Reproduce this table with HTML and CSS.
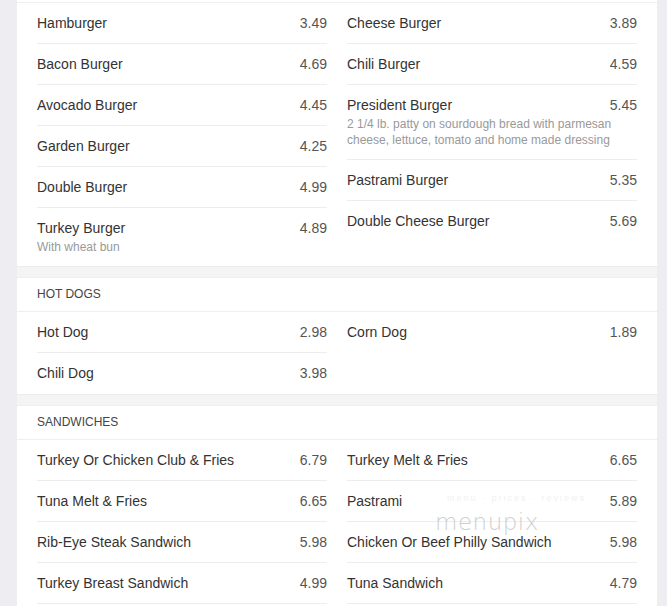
FILE: index.html
```html
<!DOCTYPE html>
<html lang="en">
<head>
<meta charset="utf-8">
<title>Menu</title>
<link rel="stylesheet" href="styles.css">
</head>
<body>
<div class="page">
  <div class="menu">
    <section class="card">
      <h2 class="card-title">BURGERS</h2>
      <div class="cols">
        <ul class="list">
          <li class="item"><span class="name">Hamburger</span><span class="price">3.49</span></li>
          <li class="item"><span class="name">Bacon Burger</span><span class="price">4.69</span></li>
          <li class="item"><span class="name">Avocado Burger</span><span class="price">4.45</span></li>
          <li class="item"><span class="name">Garden Burger</span><span class="price">4.25</span></li>
          <li class="item"><span class="name">Double Burger</span><span class="price">4.99</span></li>
          <li class="item"><span class="name">Turkey Burger</span><span class="price">4.89</span><span class="desc">With wheat bun</span></li>
        </ul>
        <ul class="list">
          <li class="item"><span class="name">Cheese Burger</span><span class="price">3.89</span></li>
          <li class="item"><span class="name">Chili Burger</span><span class="price">4.59</span></li>
          <li class="item"><span class="name">President Burger</span><span class="price">5.45</span><span class="desc">2 1/4 lb. patty on sourdough bread with parmesan cheese, lettuce, tomato and home made dressing</span></li>
          <li class="item"><span class="name">Pastrami Burger</span><span class="price">5.35</span></li>
          <li class="item"><span class="name">Double Cheese Burger</span><span class="price">5.69</span></li>
        </ul>
      </div>
    </section>

    <section class="card card-short">
      <h2 class="card-title">HOT DOGS</h2>
      <div class="cols">
        <ul class="list">
          <li class="item"><span class="name">Hot Dog</span><span class="price">2.98</span></li>
          <li class="item"><span class="name">Chili Dog</span><span class="price">3.98</span></li>
        </ul>
        <ul class="list">
          <li class="item"><span class="name">Corn Dog</span><span class="price">1.89</span></li>
        </ul>
      </div>
    </section>

    <section class="card card-last">
      <h2 class="card-title">SANDWICHES</h2>
      <div class="cols">
        <ul class="list">
          <li class="item"><span class="name">Turkey Or Chicken Club &amp; Fries</span><span class="price">6.79</span></li>
          <li class="item"><span class="name">Tuna Melt &amp; Fries</span><span class="price">6.65</span></li>
          <li class="item"><span class="name">Rib-Eye Steak Sandwich</span><span class="price">5.98</span></li>
          <li class="item"><span class="name">Turkey Breast Sandwich</span><span class="price">4.99</span></li>
          <li class="item"><span class="name">Grilled Cheese Sandwich</span><span class="price">3.99</span></li>
        </ul>
        <ul class="list">
          <li class="item"><span class="name">Turkey Melt &amp; Fries</span><span class="price">6.65</span></li>
          <li class="item"><span class="name">Pastrami</span><span class="price">5.89</span></li>
          <li class="item"><span class="name">Chicken Or Beef Philly Sandwich</span><span class="price">5.98</span></li>
          <li class="item"><span class="name">Tuna Sandwich</span><span class="price">4.79</span></li>
          <li class="item"><span class="name">Club Sandwich</span><span class="price">5.49</span></li>
        </ul>
      </div>
      <div class="watermark">
        <span class="wm-small">menu · prices · reviews</span>
        <span class="wm-logo">menupix</span>
      </div>
    </section>
  </div>
</div>
</body>
</html>
```

FILE: styles.css
```css
* {
  box-sizing: border-box;
}

html, body {
  margin: 0;
  padding: 0;
}

body {
  background: #ededf2;
  font-family: "Liberation Sans", Arial, sans-serif;
  overflow: hidden;
}

.page {
  padding: 0 10px 0 17px;
  margin-top: -31px;
}

.menu {
  background: #f4f4f5;
  display: flex;
  flex-direction: column;
  gap: 12px;
}

.card {
  background: #fff;
  position: relative;
  box-shadow: 0 1px 0 #ececec, 0 -1px 0 #efefef;
}

.card-title {
  margin: 0;
  padding: 8px 20px;
  font-size: 12px;
  line-height: 17px;
  font-weight: normal;
  color: #444;
  border-bottom: 1px solid #efefef;
}

.cols {
  display: grid;
  grid-template-columns: 1fr 1fr;
  column-gap: 20px;
  padding: 0 20px;
  align-items: start;
}

.card-short .cols {
  padding-bottom: 1px;
}

.list {
  list-style: none;
  margin: 0;
  padding: 0;
}

.item {
  display: grid;
  grid-template-columns: 1fr auto;
  padding: 11px 0;
  border-bottom: 1px solid #ededed;
}

.item:last-child {
  border-bottom: none;
}

.card-last .item:last-child {
  border-bottom: 1px solid #ededed;
}

.name {
  font-size: 14px;
  line-height: 18px;
  color: #333;
}

.price {
  font-size: 14px;
  line-height: 18px;
  color: #555;
  text-align: right;
}

.desc {
  grid-column: 1 / -1;
  margin-top: 2px;
  font-size: 12px;
  line-height: 16px;
  color: #999;
}

.watermark {
  position: absolute;
  left: 418px;
  top: 86px;
  display: flex;
  flex-direction: column;
  align-items: flex-start;
  pointer-events: none;
}

.wm-small {
  font-size: 9px;
  line-height: 12px;
  color: #f1f1f1;
  margin-left: 12px;
  letter-spacing: 2px;
}

.wm-logo {
  margin-top: 6px;
  font-family: "DejaVu Sans", sans-serif;
  font-weight: 200;
  font-size: 23px;
  line-height: 24px;
  color: #cfcfcf;
  letter-spacing: 0.5px;
}
```
